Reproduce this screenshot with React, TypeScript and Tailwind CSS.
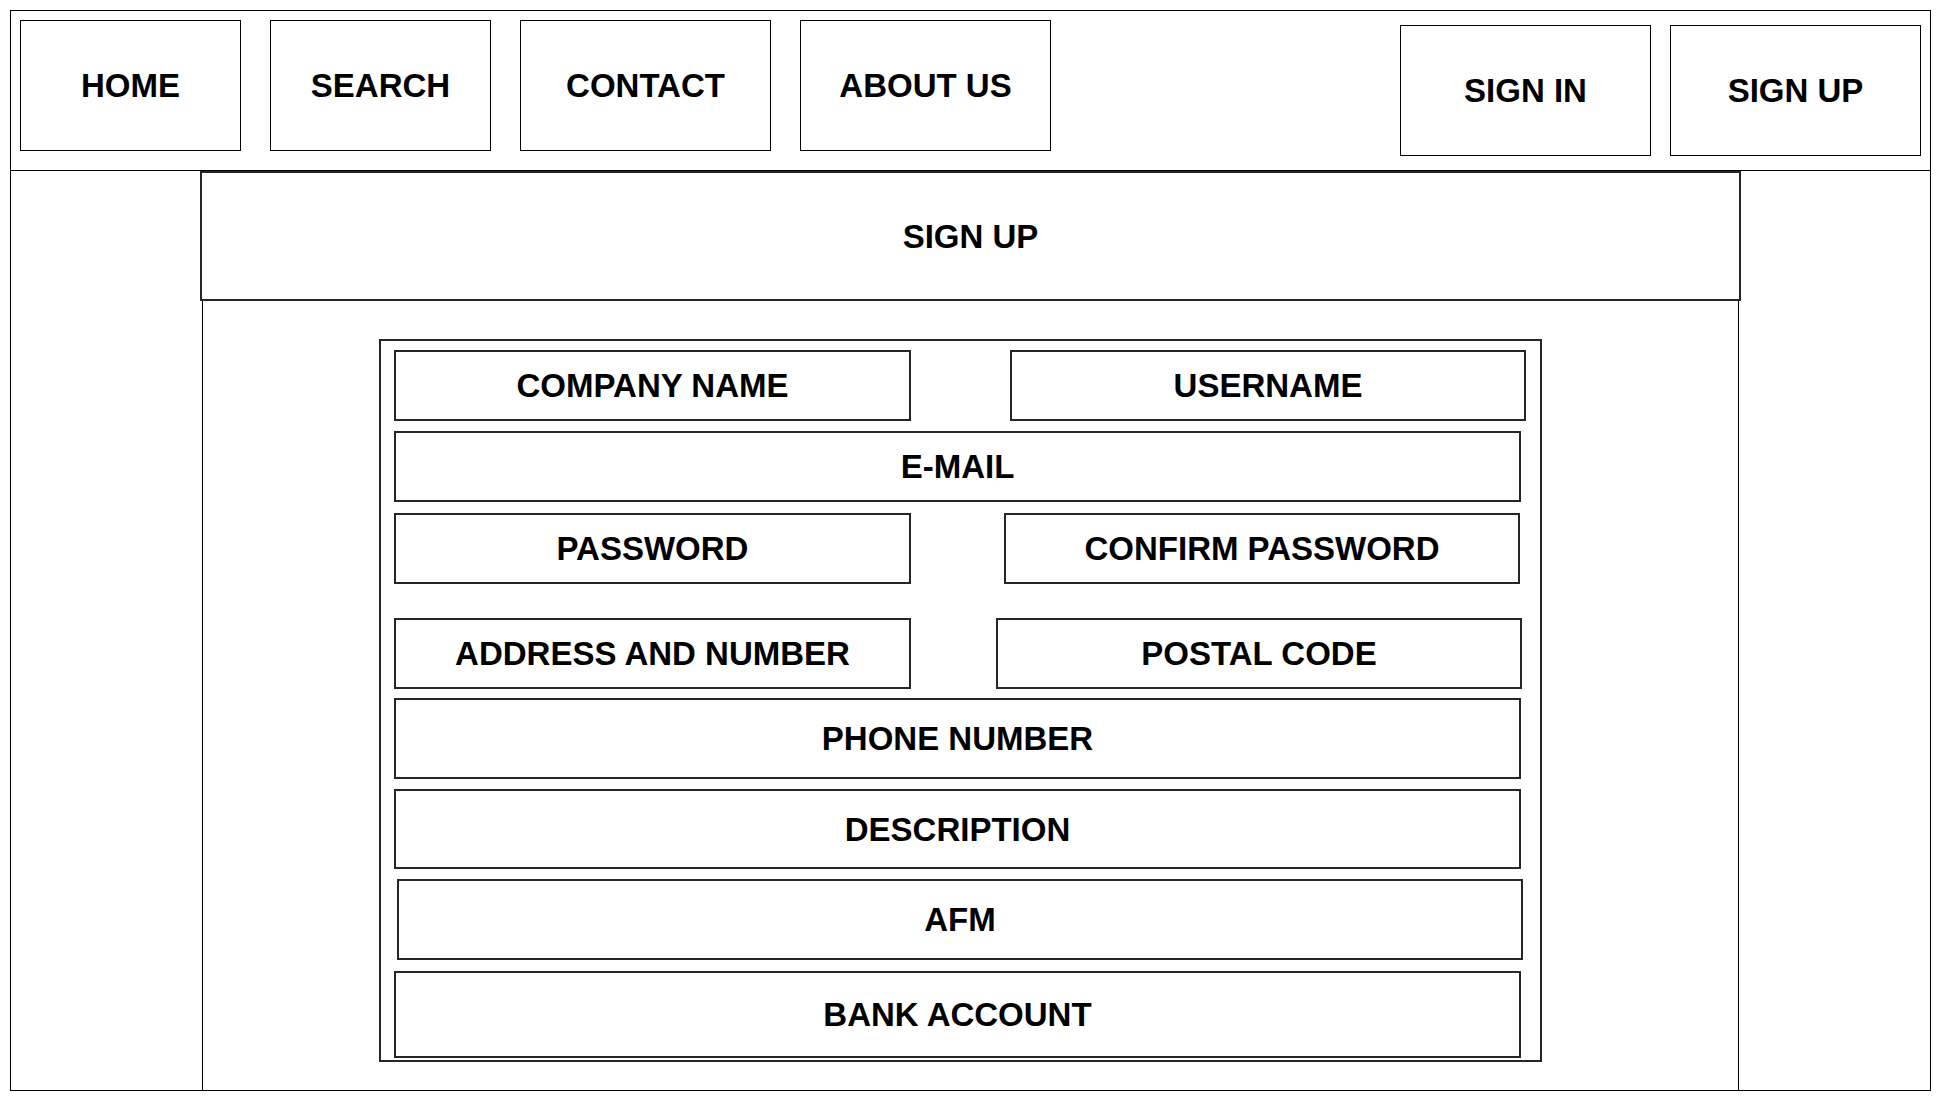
import React from "react";

const Field = ({ label, className }: { label: string; className: string }) => (
  <div
    className={`border-2 border-[#262626] flex items-center justify-center shrink-0 ${className}`}
  >
    {label}
  </div>
);

const NavBox = ({ label, className }: { label: string; className: string }) => (
  <div className={`border border-black flex items-center justify-center shrink-0 ${className}`}>{label}</div>
);

export default function App() {
  return (
    <div className="w-[1941px] h-[1101px] bg-white p-[10px] font-['Liberation_Sans',Arial,sans-serif] font-bold text-black text-[33px] leading-none">
      <div className="w-[1921px] h-[1081px] border border-black flex flex-col">
        <header className="h-[160px] shrink-0 border-b border-black flex justify-between">
          <nav className="flex gap-[29px] pl-[9px] pt-[9px]">
            <NavBox label="HOME" className="w-[221px] h-[131px]" />
            <NavBox label="SEARCH" className="w-[221px] h-[131px]" />
            <NavBox label="CONTACT" className="w-[251px] h-[131px]" />
            <NavBox label="ABOUT US" className="w-[251px] h-[131px]" />
          </nav>
          <div className="flex gap-[19px] pr-[9px] pt-[14px]">
            <NavBox label="SIGN IN" className="w-[251px] h-[131px]" />
            <NavBox label="SIGN UP" className="w-[251px] h-[131px]" />
          </div>
        </header>
        <main className="flex-1 flex flex-col">
          <div className="ml-[189px] w-[1541px] h-[130px] shrink-0 border-2 border-[#262626] flex items-center justify-center">
            SIGN UP
          </div>
          <div className="ml-[191px] w-[1537px] flex-1 border-x border-black">
            <div className="mt-[38px] ml-[176px] w-[1163px] h-[723px] border-2 border-[#262626] flex flex-col">
              <div className="mt-[9px] flex">
                <Field label="COMPANY NAME" className="ml-[13px] w-[517px] h-[71px]" />
                <Field label="USERNAME" className="ml-[99px] w-[516px] h-[71px]" />
              </div>
              <Field label="E-MAIL" className="mt-[10px] ml-[13px] w-[1127px] h-[71px]" />
              <div className="mt-[11px] flex">
                <Field label="PASSWORD" className="ml-[13px] w-[517px] h-[71px]" />
                <Field label="CONFIRM PASSWORD" className="ml-[93px] w-[516px] h-[71px]" />
              </div>
              <div className="mt-[34px] flex">
                <Field label="ADDRESS AND NUMBER" className="ml-[13px] w-[517px] h-[71px]" />
                <Field label="POSTAL CODE" className="ml-[85px] w-[526px] h-[71px]" />
              </div>
              <Field label="PHONE NUMBER" className="mt-[9px] ml-[13px] w-[1127px] h-[81px]" />
              <Field label="DESCRIPTION" className="mt-[10px] ml-[13px] w-[1127px] h-[80px]" />
              <Field label="AFM" className="mt-[10px] ml-[16px] w-[1126px] h-[81px]" />
              <Field label="BANK ACCOUNT" className="mt-[11px] ml-[13px] w-[1127px] h-[87px]" />
            </div>
          </div>
        </main>
      </div>
    </div>
  );
}
